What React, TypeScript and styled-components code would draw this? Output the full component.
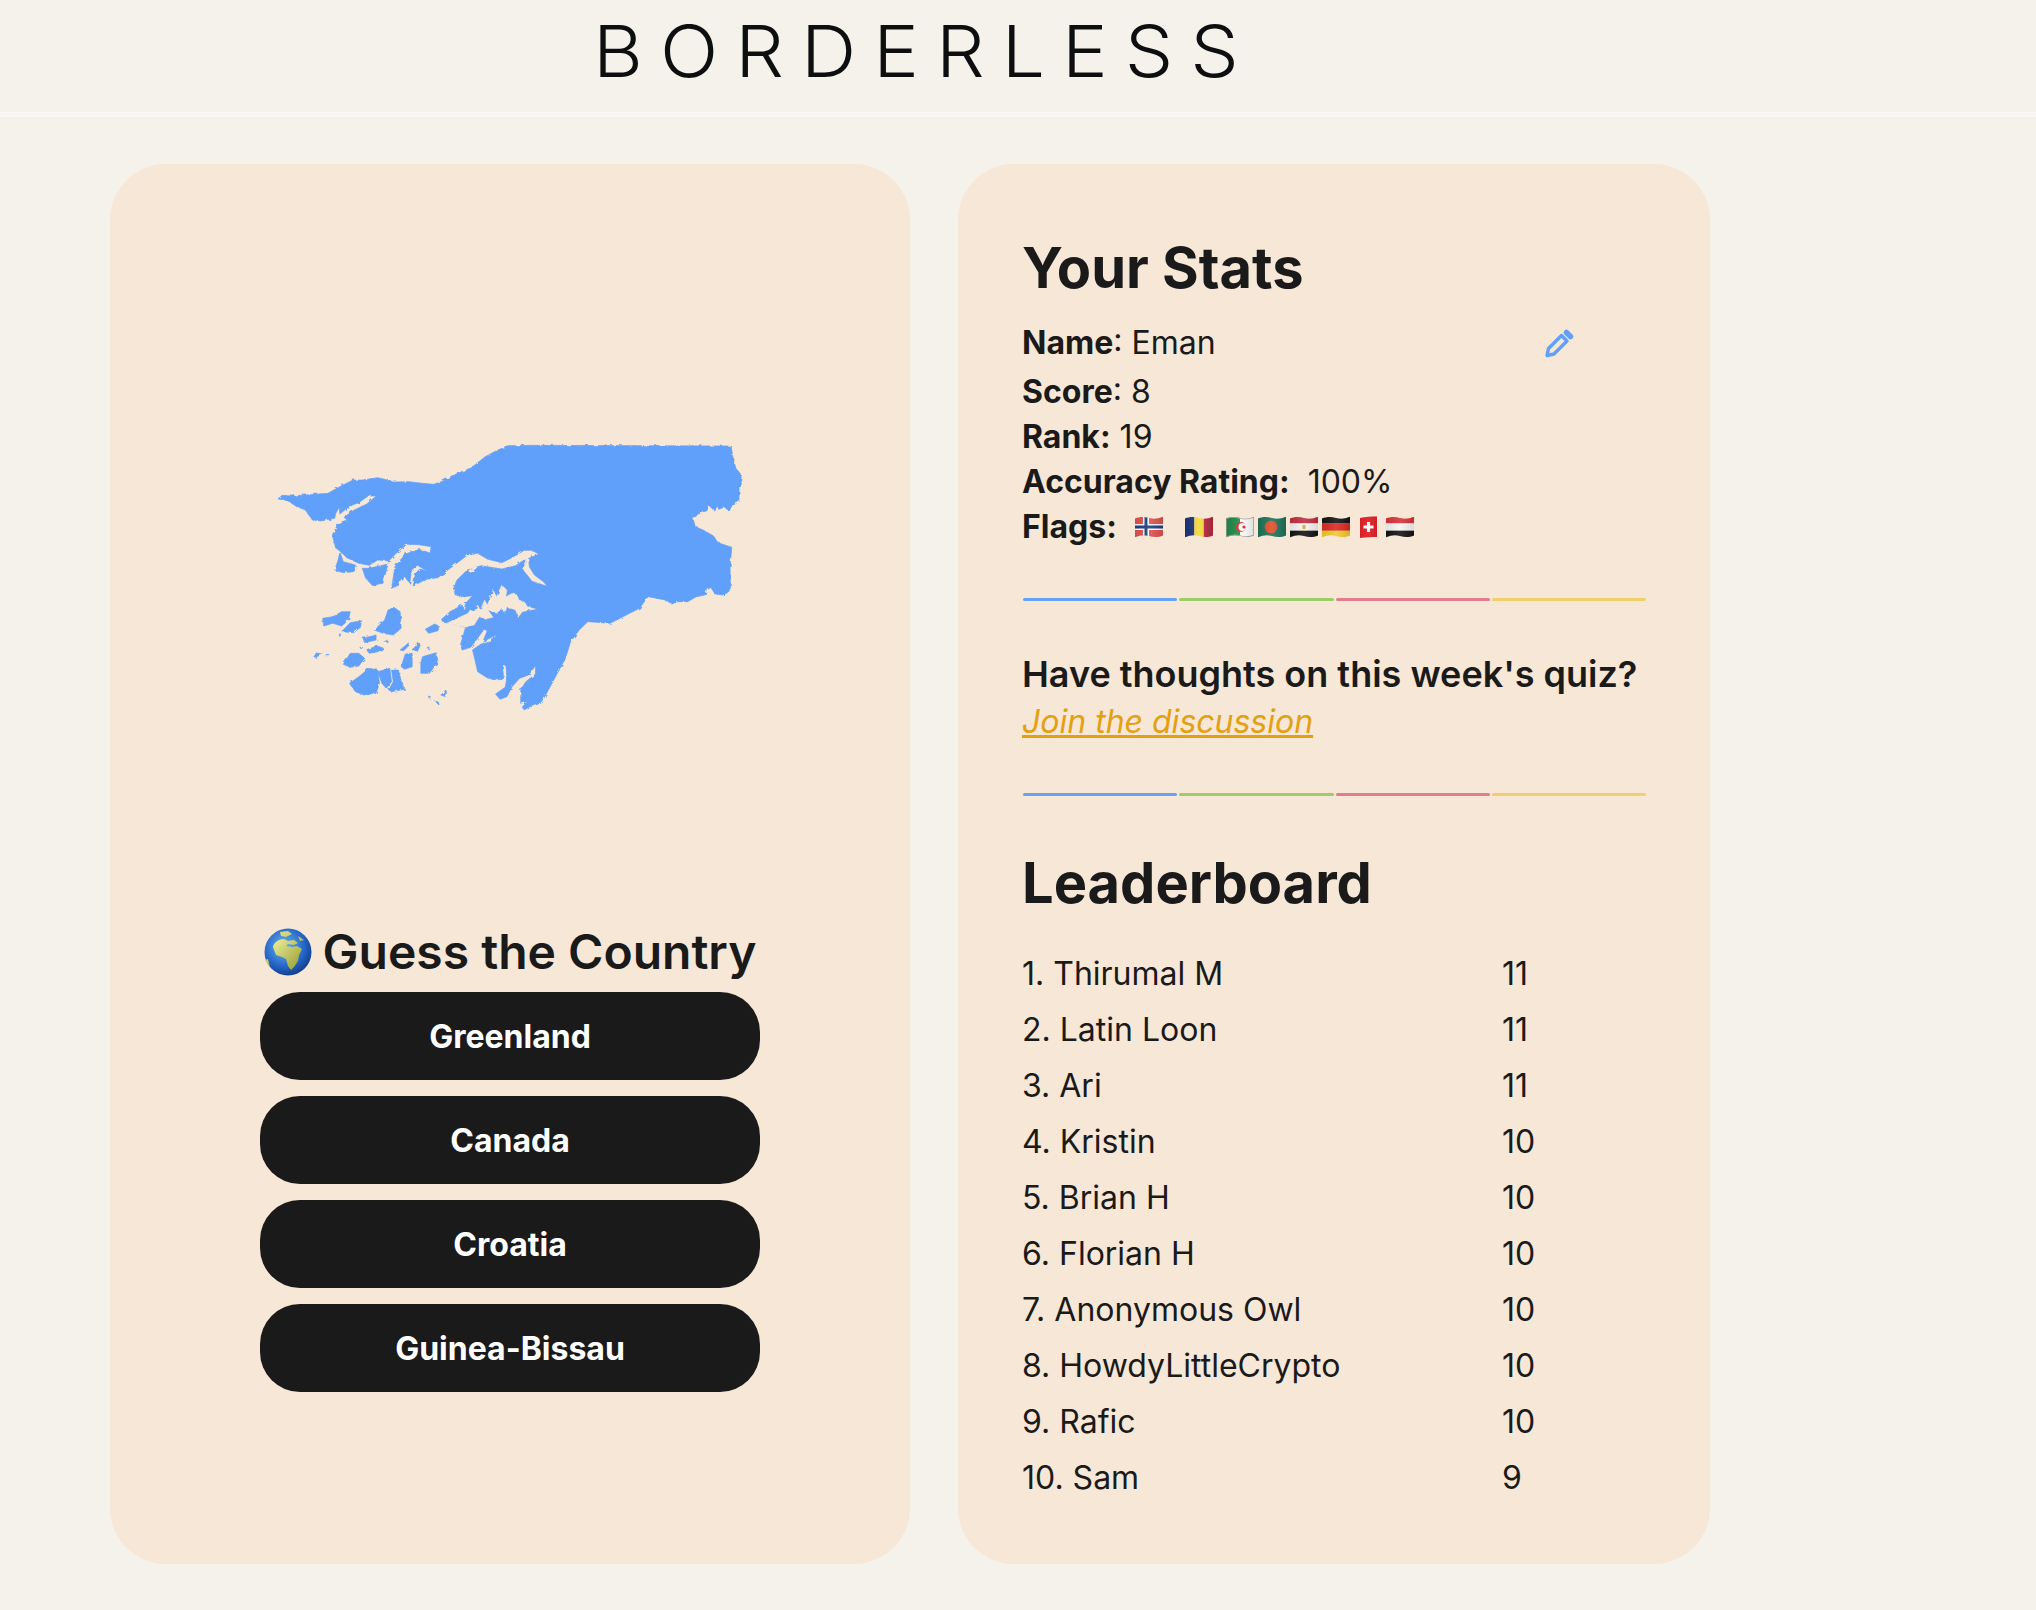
import React from "react";
import styled, { createGlobalStyle } from "styled-components";

const ink = "#1a1a1a";
const sand = "#f7e7d6";
const blue = "#60a0fa";

const leaders = [
  ["1. Thirumal M", 11],
  ["2. Latin Loon", 11],
  ["3. Ari", 11],
  ["4. Kristin", 10],
  ["5. Brian H", 10],
  ["6. Florian H", 10],
  ["7. Anonymous Owl", 10],
  ["8. HowdyLittleCrypto", 10],
  ["9. Rafic", 10],
  ["10. Sam", 9],
] as const;

const choices = ["Greenland", "Canada", "Croatia", "Guinea-Bissau"];

// traced from the map, in a 1568x960 box
const mainland =
  "M110 237 122 226 150 228 190 225 255 220 290 200 328 180 355 180 400 173 420 178 445 186 490 185 530 190 562 193 585 185 620 165 672 143 712 110 745 92 778 77 850 76 1426 78 1432 115 1440 145 1452 160 1458 180 1449 200 1449 240 1432 250 1421 272 1405 262 1390 268 1384 255 1376 270 1362 258 1356 272 1330 282 1316 298 1322 320 1345 330 1375 348 1388 368 1428 382 1423 440 1424 515 1400 525 1380 522 1365 500 1355 505 1350 525 1325 530 1300 545 1270 545 1255 552 1235 540 1185 530 1160 565 1075 610 1010 605 985 630 960 665 945 715 885 830 875 845 850 855 825 870 820 860 835 845 815 850 815 810 830 785 858 762 858 737 838 765 812 775 790 800 775 830 755 838 742 822 770 802 775 775 772 735 762 735 765 770 750 780 720 775 690 755 680 710 675 690 700 672 730 665 745 645 725 655 705 665 718 632 708 628 690 655 670 682 645 690 640 675 655 622 610 610 590 607 585 598 610 575 645 555 650 572 655 550 675 527 650 530 625 525 620 505 630 480 660 450 700 437 760 447 800 437 828 418 822 450 848 484 892 499 882 486 855 465 840 440 838 415 867 403 850 391 825 391 790 413 760 428 720 418 690 400 660 406 625 433 575 473 540 478 503 498 510 460 522 447 542 452 515 436 498 450 493 490 478 470 465 480 462 495 440 505 450 440 480 402 520 388 552 399 555 380 520 374 485 373 455 398 432 423 400 420 375 436 345 430 310 413 290 392 278 385 268 345 285 310 310 300 302 292 328 272 368 252 396 228 372 228 345 248 318 258 290 282 288 262 278 280 275 295 235 303 210 300 190 270 165 260 135 240Z";

const inlet =
  "M600 610 640 590 662 580 668 570 680 575 690 555 698 570 710 540 718 555 735 510 745 530 760 495 775 510 772 530 790 520 805 525 810 540 825 545 835 560 858 567 820 575 808 592 800 570 775 560 770 580 760 565 745 580 720 570 735 592 712 598 695 590 680 615 655 622Z";

const islands = [
  "M290 395 300 425 335 435 330 455 300 458 275 450 285 420Z",
  "M355 445 375 445 430 432 415 490 385 497 365 475Z",
  "M240 595 270 590 295 575 320 575 315 600 295 618 270 610 243 618Z",
  "M295 635 320 608 353 602 350 622 330 638Z",
  "M390 630 420 600 430 570 447 562 465 575 468 625 445 645 415 640Z",
  "M357 655 395 645 395 660 362 668Z",
  "M538 628 565 612 578 618 575 632 548 640Z",
  "M370 688 400 678 417 685 400 695 375 700Z",
  "M465 690 490 668 492 675 475 692Z",
  "M500 690 515 668 525 672 515 695Z",
  "M300 733 320 700 345 700 362 715 345 738 320 742Z",
  "M468 740 480 702 500 700 500 740 478 748Z",
  "M525 730 530 710 570 698 575 725 550 760 525 760Z",
  "M318 790 345 770 375 745 400 750 405 790 395 820 360 825 335 815Z",
  "M400 755 435 745 440 785 425 805 412 790Z",
  "M440 750 460 750 470 790 478 808 440 815 432 810 445 785Z",
  "M215 710 222 698 240 703 218 712Z",
  "M250 705 262 707 250 708Z",
  "M583 825 598 810 600 820 590 828Z",
  "M568 845 575 845 575 852Z",
  "M547 828 553 830 550 835Z",
  "M418 665 430 660 430 668Z",
  "M348 682 356 682 352 687Z",
  "M545 685 552 685 550 690Z",
  "M288 642 292 642 290 650Z",
];

const Global = createGlobalStyle`
  html, body {
    margin: 0;
    background: #f5f2eb;
  }
  body {
    font-family: Inter, "Liberation Sans", sans-serif;
    color: ${ink};
  }
`;

const Page = styled.div`
  width: 2036px;
  height: 1610px;
  overflow: hidden;
`;

const Header = styled.header`
  height: 112px;
  box-sizing: content-box;
  border-bottom: 5px solid #f8f6f2;
  display: flex;
  align-items: center;
  padding-left: 593px;
`;

const Logo = styled.h1`
  margin: 0;
  font-weight: 350;
  font-size: 72px;
  letter-spacing: 16px;
  line-height: 1;
  color: #0c0e10;
  position: relative;
  top: -5px;
  transform: scaleX(1.066);
  transform-origin: left center;
`;

const Main = styled.main`
  display: flex;
  gap: 48px;
  padding: 47px 0 0 110px;
`;

const Card = styled.section<{ $width: number }>`
  width: ${({ $width }) => $width}px;
  height: 1400px;
  box-sizing: border-box;
  background: ${sand};
  border-radius: 56px;
`;

const QuizCard = styled(Card)`
  display: flex;
  flex-direction: column;
  align-items: center;
  padding-top: 256px;
`;

const CountryMap = styled.svg`
  width: 540px;
  height: 320px;
  display: block;
`;

const Question = styled.h2`
  margin: 176px 0 0;
  height: 72px;
  display: flex;
  align-items: center;
  gap: 11px;
  font-size: 48px;
  font-weight: 600;
  line-height: 1;
`;

const Globe = styled.svg`
  width: 48px;
  height: 48px;
  flex: none;
`;

const Choices = styled.div`
  display: flex;
  flex-direction: column;
  gap: 16px;
  margin-top: 4px;
`;

const Choice = styled.button`
  width: 500px;
  height: 88px;
  border: 0;
  border-radius: 40px;
  background: ${ink};
  color: #fff;
  font: 700 32px Inter, sans-serif;
`;

const StatsCard = styled(Card)`
  padding: 68px 64px 0;
`;

const Title = styled.h2`
  margin: 0;
  font-size: 56px;
  font-weight: 700;
  line-height: 72px;
`;

const StatLines = styled.div`
  margin-top: 12px;
  font-size: 32px;
  line-height: 45px;
`;

const NameRow = styled.div`
  display: flex;
  justify-content: space-between;
  height: 53px;
  align-items: center;
  padding-right: 72px;
`;

const Stat = styled.div`
  display: flex;
  align-items: center;
  white-space: pre;
`;

const Label = styled.b`
  font-weight: 700;
`;

const EditIcon = styled.svg`
  width: 30px;
  height: 30px;
  color: ${blue};
`;

const FlagRow = styled.span`
  display: flex;
  margin-left: 18px;
`;

const FlagSvg = styled.svg<{ $after: number }>`
  width: 28px;
  height: 22px;
  margin-right: ${({ $after }) => $after}px;
`;

const Rule = styled.div`
  display: flex;
  gap: 2px;
  margin: 0 0 0 1px;
  height: 3px;
`;

const RuleBit = styled.i<{ $color: string }>`
  flex: 1;
  background: ${({ $color }) => $color};
  border-radius: 2px;
`;

const FirstRule = styled(Rule)`
  margin-top: 49px;
`;

const SecondRule = styled(Rule)`
  margin-top: 47px;
`;

const Thoughts = styled.div`
  margin-top: 49px;
  font-size: 36px;
  font-weight: 600;
  line-height: 48px;
`;

const Discussion = styled.a`
  display: block;
  font-size: 32px;
  font-weight: 400;
  font-style: italic;
  color: #e2a012;
  text-decoration: underline;
  text-decoration-thickness: 3px;
  line-height: 48px;
`;

const BoardTitle = styled(Title)`
  margin-top: 51px;
`;

const Board = styled.ol`
  list-style: none;
  margin: 26px 0 0;
  padding: 0;
  font-size: 32px;
`;

const BoardRow = styled.li`
  display: grid;
  grid-template-columns: 480px auto;
  height: 56px;
  align-items: center;
`;

const Stripes = ({ colors }: { colors: string[] }) => (
  <>
    {colors.map((c, i) => (
      <rect key={i} x="0" y={(i * 22) / colors.length} width="28" height={22 / colors.length + 0.2} fill={c} />
    ))}
  </>
);

const wave = "M0 2.500C5 .5 9 .5 14 2S23 2.800 28 .8V19.500C23 21.500 19 21.500 14 20S5 19.200 0 21.200Z";
const swissShape = "M6 2C11 .5 18 .5 23 .5V21C18 21 11 21 6 22Z";

const flagArt: Record<string, React.ReactNode> = {
  norway: (
    <>
      <rect width="28" height="22" fill="#e0524d" />
      <path d="M8 0h6v22H8zM0 8h28v6H0z" fill="#fff" />
      <path d="M9.500 0h3v22h-3zM0 9.500h28v3H0z" fill="#1f3f80" />
    </>
  ),
  romania: (
    <>
      <rect width="9.400" height="22" fill="#1c3578" />
      <rect x="9.400" width="9.400" height="22" fill="#f5d93a" />
      <rect x="18.800" width="9.200" height="22" fill="#b8273e" />
    </>
  ),
  algeria: (
    <>
      <rect width="14" height="22" fill="#1f8a46" />
      <rect x="14" width="14" height="22" fill="#fdfdfb" />
      <circle cx="15" cy="11" r="5" fill="#e0262b" />
      <circle cx="16.500" cy="11" r="4" fill="#fdfdfb" />
      <circle cx="18" cy="11" r="1.600" fill="#e0262b" />
      <path d={wave} fill="none" stroke="#a9a69f" strokeWidth="1.400" />
    </>
  ),
  bangladesh: (
    <>
      <rect width="28" height="22" fill="#1f7359" />
      <circle cx="13" cy="11" r="6.300" fill="#e04f2c" />
    </>
  ),
  egypt: (
    <>
      <Stripes colors={["#c0303f", "#f5f5f2", "#141414"]} />
      <rect x="12.500" y="9" width="3" height="4" fill="#d6a72f" />
    </>
  ),
  germany: <Stripes colors={["#141414", "#dd2a22", "#f2c92e"]} />,
  swiss: (
    <>
      <rect x="6" width="17" height="22" fill="#e0161f" />
      <path d="M13 6h3v3.500h3.500v3H16V16h-3v-3.500H9.500v-3H13z" fill="#fff" />
    </>
  ),
  yemen: <Stripes colors={["#d8333a", "#f5f5f2", "#141414"]} />,
};

const flags: [string, number][] = [
  ["norway", 22],
  ["romania", 13],
  ["algeria", 4],
  ["bangladesh", 4],
  ["egypt", 4],
  ["germany", 4],
  ["swiss", 4],
  ["yemen", 0],
];

const Flag = ({ name, after }: { name: string; after: number }) => (
  <FlagSvg $after={after} viewBox="0 0 28 22">
    <defs>
      <clipPath id={`wave-${name}`}>
        <path d={name === "swiss" ? swissShape : wave} />
      </clipPath>
      <linearGradient id={`shade-${name}`} x1="0" y1="0" x2="1" y2="0">
        <stop offset="0" stopColor="#000" stopOpacity="0.08" />
        <stop offset="0.5" stopColor="#fff" stopOpacity="0.1" />
        <stop offset="1" stopColor="#000" stopOpacity="0.12" />
      </linearGradient>
    </defs>
    <g clipPath={`url(#wave-${name})`}>
      {flagArt[name]}
      <rect width="28" height="22" fill={`url(#shade-${name})`} />
    </g>
  </FlagSvg>
);

const Divider = ({ as: Comp = FirstRule }: { as?: typeof FirstRule }) => (
  <Comp>
    {["#66a2f5", "#9ccd68", "#e57c8e", "#efd06c"].map((c) => (
      <RuleBit key={c} $color={c} />
    ))}
  </Comp>
);

export default function App() {
  return (
    <Page>
      <Global />
      <Header>
        <Logo>BORDERLESS</Logo>
      </Header>
      <Main>
        <QuizCard $width={800}>
          <CountryMap viewBox="0 0 1568 960" preserveAspectRatio="none">
            <defs>
              <filter id="coast" x="-5%" y="-5%" width="110%" height="110%">
                <feTurbulence type="fractalNoise" baseFrequency="0.07" numOctaves="2" seed="4" />
                <feDisplacementMap in="SourceGraphic" scale="9" />
                <feGaussianBlur stdDeviation="0.8" />
              </filter>
            </defs>
            <g filter="url(#coast)">
              <g fill={blue} stroke={blue} strokeWidth="2" strokeLinejoin="round">
                <path d={mainland} />
                {islands.map((d) => (
                  <path key={d} d={d} />
                ))}
              </g>
              <path d={inlet} fill={sand} stroke={sand} strokeWidth="1" strokeLinejoin="round" />
              <circle cx="590" cy="520" r="3" fill={sand} />
              <path d="M425 470 432 460 430 475Z M662 452 680 440 690 442 670 458Z" fill={sand} />
            </g>
          </CountryMap>
          <Question>
            <Globe viewBox="0 0 48 48">
              <defs>
                <radialGradient id="sea" cx="0.42" cy="0.38" r="0.65">
                  <stop offset="0" stopColor="#6fb6ee" />
                  <stop offset="0.65" stopColor="#2467c9" />
                  <stop offset="1" stopColor="#123b8c" />
                </radialGradient>
                <linearGradient id="land" x1="0" y1="0" x2="1" y2="1">
                  <stop offset="0" stopColor="#eef09a" />
                  <stop offset="1" stopColor="#93992f" />
                </linearGradient>
              </defs>
              <circle cx="24" cy="24" r="23.500" fill="url(#sea)" />
              <path
                d="M9 19C10 14 15 11 20 11L24 13 30 12 34 15 30 17 24 16 22 18 28 19 33 18 38 21 35 27 34 33 30 39 27 42 24 38 22 31 18 29 12 27Z"
                fill="url(#land)"
              />
              <path d="M16 4 24 3 28 6 22 9 17 8Z M34 8 40 12 36 13Z M1 32 4 31 6 39Z" fill="url(#land)" />
            </Globe>
            Guess the Country
          </Question>
          <Choices>
            {choices.map((c) => (
              <Choice key={c}>{c}</Choice>
            ))}
          </Choices>
        </QuizCard>
        <StatsCard $width={752}>
          <Title>Your Stats</Title>
          <StatLines>
            <NameRow>
              <Stat>
                <Label>Name</Label>: Eman
              </Stat>
              <EditIcon viewBox="0 0 30 30" fill="none" stroke="currentColor" strokeLinejoin="round">
                <path d="M3 27.500 4.500 20.500 17.500 7.500 23 13 10 26z" strokeWidth="3.400" />
                <path d="M22.500 4.500 26.500 8.500" strokeWidth="5.500" strokeLinecap="round" />
              </EditIcon>
            </NameRow>
            <Stat>
              <Label>Score</Label>: 8
            </Stat>
            <Stat>
              <Label>Rank:</Label> 19
            </Stat>
            <Stat>
              <Label>Accuracy Rating:</Label>  100%
            </Stat>
            <Stat>
              <Label>Flags:</Label>
              <FlagRow>
                {flags.map(([name, after]) => (
                  <Flag key={name} name={name} after={after} />
                ))}
              </FlagRow>
            </Stat>
          </StatLines>
          <Divider />
          <Thoughts>
            Have thoughts on this week's quiz?
            <Discussion href="#">Join the discussion</Discussion>
          </Thoughts>
          <Divider as={SecondRule} />
          <BoardTitle>Leaderboard</BoardTitle>
          <Board>
            {leaders.map(([name, score]) => (
              <BoardRow key={name}>
                <span>{name}</span>
                <span>{score}</span>
              </BoardRow>
            ))}
          </Board>
        </StatsCard>
      </Main>
    </Page>
  );
}
